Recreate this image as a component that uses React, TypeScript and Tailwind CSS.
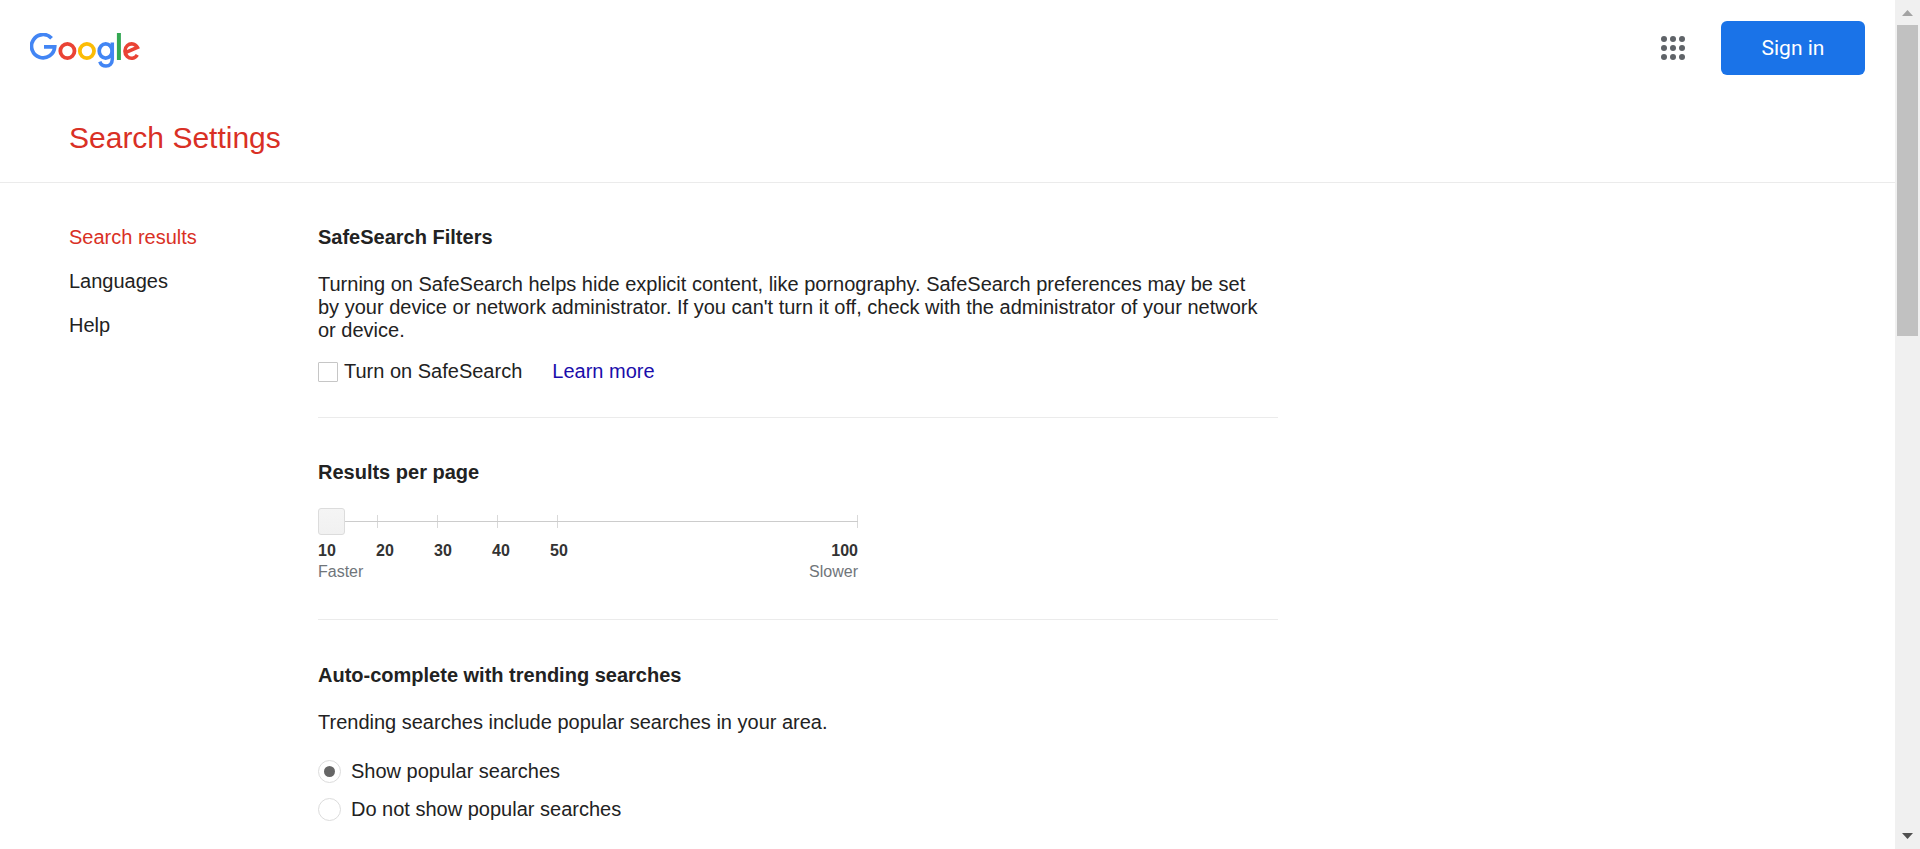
import { useState, type ReactNode } from "react";

const navItems = [
  { label: "Search results", active: true },
  { label: "Languages", active: false },
  { label: "Help", active: false },
];

const trendingOptions = [
  { value: "show", label: "Show popular searches" },
  { value: "hide", label: "Do not show popular searches" },
];

function GoogleLogo() {
  return (
    <svg viewBox="0 0 111 36" className="h-9 w-[111px]" fill="none" role="img" aria-label="Google">
      <path d="M21.6 5.2A11.6 11.6 0 1 0 24.7 13.8H14" stroke="#4285f4" strokeWidth="3.7" />
      <circle cx="37.4" cy="18" r="7.1" stroke="#ea4335" strokeWidth="3.8" />
      <circle cx="56.9" cy="18" r="7.1" stroke="#fbbc05" strokeWidth="3.8" />
      <ellipse cx="75.7" cy="18" rx="6.5" ry="7.1" stroke="#4285f4" strokeWidth="3.7" />
      <path d="M82.3 9.6V26C82.3 30.6 79.6 33 76 33C72.9 33 70.7 31.2 69.8 28.6" stroke="#4285f4" strokeWidth="3.5" />
      <path d="M88.9 0V27" stroke="#34a853" strokeWidth="4" />
      <path d="M107.3 21.9A6.7 7.2 0 1 1 107.4 14.4L95.4 19.7" stroke="#ea4335" strokeWidth="3.6" />
    </svg>
  );
}

function AppsIcon() {
  return (
    <svg viewBox="0 0 24 24" className="size-6" fill="#5f6368" aria-hidden="true">
      {[3, 12, 21].map((cy) => [3, 12, 21].map((cx) => <circle key={`${cx}-${cy}`} cx={cx} cy={cy} r="3" />))}
    </svg>
  );
}

function Section({ title, last, children }: { title: string; last?: boolean; children: ReactNode }) {
  return (
    <section className={last ? "pt-11 pb-5" : "border-b border-[#ebebeb] pt-[43px] pb-[34px]"}>
      <h2 className="mb-6 font-bold">{title}</h2>
      {children}
    </section>
  );
}

function ResultsSlider() {
  const [value, setValue] = useState(10);
  return (
    <div className="max-w-[540px]">
      <div className="grid items-center">
        <div className="col-start-1 row-start-1 flex h-[13px]" aria-hidden="true">
          <span className="w-[60px] border-r border-[#d9d9d9]" />
          <span className="w-[60px] border-r border-[#d9d9d9]" />
          <span className="w-[60px] border-r border-[#d9d9d9]" />
          <span className="w-[60px] border-r border-[#d9d9d9]" />
          <span className="flex-1 border-r border-[#d9d9d9]" />
        </div>
        <input
          type="range"
          min={10}
          max={100}
          step={10}
          value={value}
          onChange={(e) => setValue(Number(e.target.value))}
          aria-label="Results per page"
          className="col-start-1 row-start-1 h-[27px] w-full cursor-pointer appearance-none bg-transparent [&::-webkit-slider-runnable-track]:h-px [&::-webkit-slider-runnable-track]:bg-[#ccc] [&::-webkit-slider-thumb]:-mt-[13px] [&::-webkit-slider-thumb]:size-[27px] [&::-webkit-slider-thumb]:appearance-none [&::-webkit-slider-thumb]:rounded-[3px] [&::-webkit-slider-thumb]:border [&::-webkit-slider-thumb]:border-[#dcdcdc] [&::-webkit-slider-thumb]:bg-linear-to-b [&::-webkit-slider-thumb]:from-[#f5f5f5] [&::-webkit-slider-thumb]:to-[#f1f1f1]"
        />
      </div>
      <div className="mt-[5px] flex text-[16px] leading-[21px] font-bold text-[#333]">
        <span className="w-[58px]">10</span>
        <span className="w-[58px]">20</span>
        <span className="w-[58px]">30</span>
        <span className="w-[58px]">40</span>
        <span className="w-[58px]">50</span>
        <span className="ml-auto">100</span>
      </div>
      <div className="mb-[3px] flex justify-between text-[16px] leading-[21px] text-[#70757a]">
        <span>Faster</span>
        <span>Slower</span>
      </div>
    </div>
  );
}

function Scrollbar() {
  return (
    <div className="flex w-[25px] shrink-0 flex-col items-center bg-[#f0f0f0]" aria-hidden="true">
      <div className="flex h-[25px] items-center">
        <svg viewBox="0 0 11 6" className="h-1.5 w-[11px]" fill="#a3a3a3">
          <path d="M5.5 0L11 6H0Z" />
        </svg>
      </div>
      <div className="h-[311px] w-[21px] bg-[#c1c1c1]" />
      <div className="mt-auto flex h-[26px] items-center">
        <svg viewBox="0 0 11 6" className="h-1.5 w-[11px]" fill="#505050">
          <path d="M5.5 6L11 0H0Z" />
        </svg>
      </div>
    </div>
  );
}

export default function App() {
  const [safeSearch, setSafeSearch] = useState(false);
  const [trending, setTrending] = useState("show");

  return (
    <div className="flex h-screen bg-white font-['Liberation_Sans',Arial,sans-serif] text-[20px] leading-[23px] text-[#222]">
      <div className="min-w-0 flex-1 overflow-y-auto [scrollbar-width:none]">
        <header className="flex h-24 items-center justify-between px-[30px]">
          <a href="#" aria-label="Google home" className="mt-1.5">
            <GoogleLogo />
          </a>
          <div className="flex items-center gap-9">
            <button type="button" aria-label="Google apps" className="cursor-pointer">
              <AppsIcon />
            </button>
            <a
              href="#"
              className="flex h-[54px] w-36 items-center justify-center rounded-md bg-[#1a73e8] font-[Roboto,sans-serif] text-[21px] text-white"
            >
              Sign in
            </a>
          </div>
        </header>

        <div className="border-b border-[#ebebeb] px-[69px] pt-[25px] pb-[27px]">
          <h1 className="text-[30px] leading-[34px] text-[#d93025]">Search Settings</h1>
        </div>

        <div className="flex pl-[69px]">
          <nav className="w-[249px] shrink-0 pt-[43px]">
            <ul className="flex flex-col gap-[21px]">
              {navItems.map((item) => (
                <li key={item.label}>
                  <a
                    href="#"
                    aria-current={item.active ? "page" : undefined}
                    className={item.active ? "text-[#d93025]" : "text-[#222]"}
                  >
                    {item.label}
                  </a>
                </li>
              ))}
            </ul>
          </nav>

          <main className="max-w-[960px] flex-1">
            <Section title="SafeSearch Filters">
              <p className="max-w-[945px]">
                Turning on SafeSearch helps hide explicit content, like pornography. SafeSearch preferences may be set
                by your device or network administrator. If you can't turn it off, check with the administrator of your
                network or device.
              </p>
              <div className="mt-[18px] flex items-center gap-[30px]">
                <label className="flex cursor-pointer items-center gap-1.5">
                  <input
                    type="checkbox"
                    checked={safeSearch}
                    onChange={(e) => setSafeSearch(e.target.checked)}
                    className="size-5 appearance-none rounded-[1px] border border-[#c6c6c6] checked:bg-[#666]"
                  />
                  Turn on SafeSearch
                </label>
                <a href="#" className="text-[#1a0dab]">
                  Learn more
                </a>
              </div>
            </Section>

            <Section title="Results per page">
              <ResultsSlider />
            </Section>

            <Section title="Auto-complete with trending searches" last>
              <p>Trending searches include popular searches in your area.</p>
              <div className="mt-[26px] flex flex-col items-start gap-[15px]">
                {trendingOptions.map((option) => (
                  <label key={option.value} className="flex cursor-pointer items-center gap-2.5">
                    <input
                      type="radio"
                      name="trending"
                      value={option.value}
                      checked={trending === option.value}
                      onChange={() => setTrending(option.value)}
                      className="grid size-[23px] appearance-none place-items-center rounded-full border border-[#dcdcdc] before:size-[11px] before:rounded-full checked:before:bg-[#666]"
                    />
                    {option.label}
                  </label>
                ))}
              </div>
            </Section>
          </main>
        </div>
      </div>
      <Scrollbar />
    </div>
  );
}
